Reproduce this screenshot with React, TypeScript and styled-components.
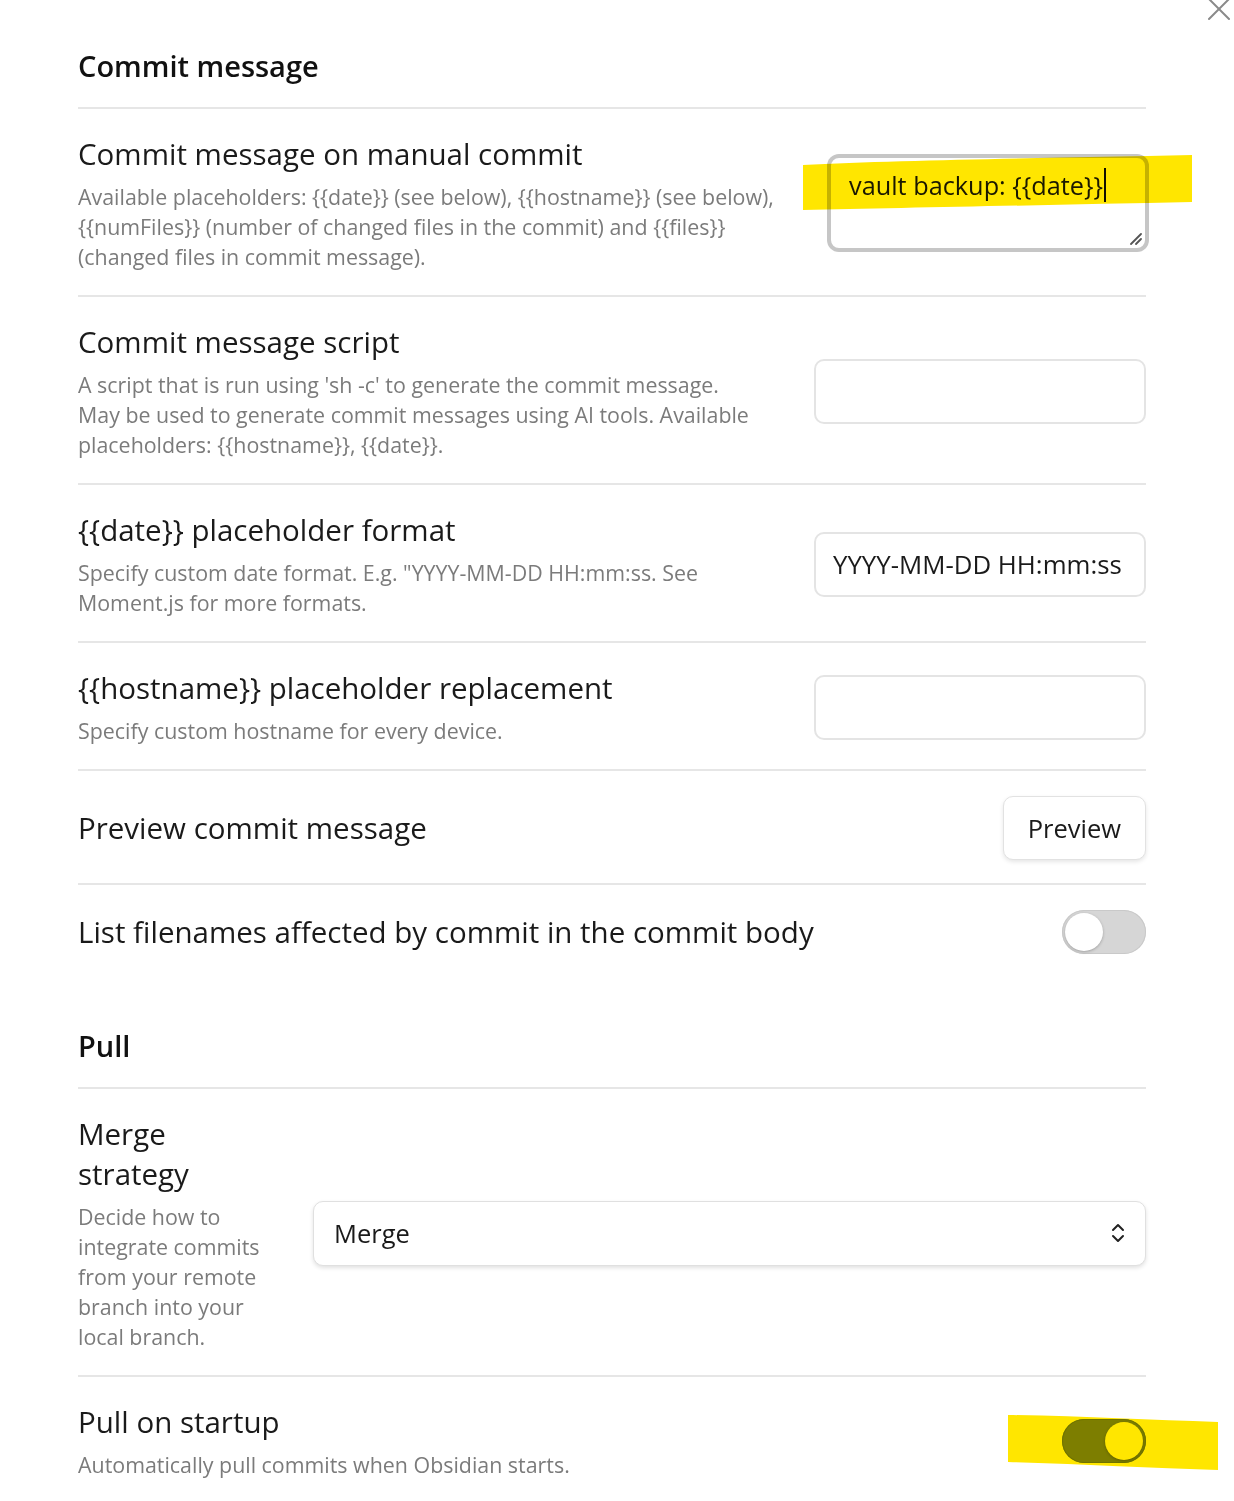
import React from "react";
import styled, { createGlobalStyle } from "styled-components";

const GlobalStyle = createGlobalStyle`
  html, body { margin: 0; padding: 0; background: #ffffff; }
  body { font-family: "Open Sans", "Noto Sans", sans-serif; color: #1e1e1e; }
  * { box-sizing: border-box; }
`;

const Page = styled.div`
  position: relative;
  width: 1234px;
  padding: 46px 88px 0 78px;
`;

const CloseButton = styled.div`
  position: absolute;
  top: -4px;
  right: 2px;
  width: 26px;
  height: 26px;
  display: flex;
  align-items: center;
  justify-content: center;
  color: #8a8a8a;
`;

const Heading = styled.div<{ $first?: boolean }>`
  font-size: 29px;
  font-weight: 600;
  line-height: 39px;
  color: #111;
  padding: ${(p) => (p.$first ? "0" : "48px")} 0 22px;
  border-bottom: 2px solid #e6e6e6;
`;

const Item = styled.div<{ $last?: boolean }>`
  display: flex;
  align-items: center;
  gap: 24px;
  padding: 25px 0 ${(p) => (p.$last ? "24px" : "23px")};
  border-bottom: ${(p) => (p.$last ? "none" : "2px solid #e6e6e6")};
`;

const Info = styled.div<{ $width?: number }>`
  flex: ${(p) => (p.$width ? `0 0 ${p.$width}px` : "1 1 auto")};
  min-width: 0;
`;

const Name = styled.div`
  font-size: 29.5px;
  line-height: 40px;
  color: #1a1a1a;
  white-space: pre-line;
`;

const Desc = styled.div`
  margin-top: 8px;
  font-size: 21.4px;
  line-height: 30px;
  color: #7b7b7b;
  white-space: pre-line;
`;

const Control = styled.div<{ $grow?: boolean }>`
  flex: ${(p) => (p.$grow ? "1 1 auto" : "0 0 auto")};
  display: flex;
  justify-content: flex-end;
`;

const TextInput = styled.div`
  width: 332px;
  height: 65px;
  border: 2px solid #e4e4e4;
  border-radius: 10px;
  background: #fff;
  display: flex;
  align-items: center;
  padding: 0 17px;
  font-size: 25.8px;
  color: #1a1a1a;
  white-space: nowrap;
`;

const TextArea = styled.div`
  position: relative;
  width: 318px;
  height: 94px;
  margin-right: -1px;
  border: 2px solid #c6c6c6;
  box-shadow: 0 0 0 2px #c6c6c6;
  border-radius: 10px;
  background: #fff;
  padding: 9px 18px;
  font-size: 25.3px;
  line-height: 36px;
  color: #1a1a1a;
  white-space: nowrap;
`;

const Caret = styled.span`
  display: inline-block;
  width: 2px;
  height: 34px;
  margin-left: 1px;
  background: #111;
  vertical-align: middle;
  position: relative;
  top: -3px;
`;

const Grip = styled.svg`
  position: absolute;
  right: 3px;
  bottom: 3px;
`;

const Button = styled.div`
  height: 64px;
  padding: 0 24px;
  border: 1px solid #e2e2e2;
  border-radius: 10px;
  background: #fff;
  box-shadow: 0 2px 4px rgba(0, 0, 0, 0.1);
  display: flex;
  align-items: center;
  font-size: 25.5px;
  color: #1a1a1a;
`;

const Toggle = styled.div<{ $on?: boolean }>`
  width: 84px;
  height: 44px;
  border-radius: 22px;
  padding: 3px;
  display: flex;
  justify-content: ${(p) => (p.$on ? "flex-end" : "flex-start")};
  align-items: center;
  background: ${(p) => (p.$on ? "#7d8ca1" : "#d6d6d6")};
  box-shadow: inset 0 0 0 1px ${(p) => (p.$on ? "#6f7f94" : "#c9c9c9")};
`;

const Thumb = styled.div`
  width: 38px;
  height: 38px;
  border-radius: 50%;
  background: #fff;
  box-shadow: 0 1px 3px rgba(0, 0, 0, 0.25);
`;

const Select = styled.div`
  width: 100%;
  height: 65px;
  border: 1px solid #e0e0e0;
  border-radius: 10px;
  background: #fff;
  box-shadow: 0 2px 4px rgba(0, 0, 0, 0.12);
  display: flex;
  align-items: center;
  justify-content: space-between;
  padding: 0 20px 0 20px;
  font-size: 25.5px;
  color: #1a1a1a;
`;

const Highlight = styled.svg`
  position: absolute;
  left: 0;
  top: 0;
  pointer-events: none;
  mix-blend-mode: multiply;
`;

export default function App() {
  return (
    <Page>
      <GlobalStyle />
      <CloseButton>
        <svg width="26" height="26" viewBox="0 0 26 26">
          <path d="M3 3 L23 23 M23 3 L3 23" stroke="currentColor" strokeWidth="2" strokeLinecap="round" />
        </svg>
      </CloseButton>

      <Heading $first>Commit message</Heading>

      <Item>
        <Info>
          <Name>Commit message on manual commit</Name>
          <Desc>
            {"Available placeholders: {{date}} (see below), {{hostname}} (see below),\n{{numFiles}} (number of changed files in the commit) and {{files}}\n(changed files in commit message)."}
          </Desc>
        </Info>
        <Control>
          <TextArea>
            vault backup: {"{{date}}"}
            <Caret />
            <Grip width="14" height="14" viewBox="0 0 14 14">
              <path d="M13 3 L3 13 M13 8 L8 13" stroke="#555" strokeWidth="1.8" strokeLinecap="round" />
            </Grip>
          </TextArea>
        </Control>
      </Item>

      <Item>
        <Info>
          <Name>Commit message script</Name>
          <Desc>
            {"A script that is run using 'sh -c' to generate the commit message.\nMay be used to generate commit messages using AI tools. Available\nplaceholders: {{hostname}}, {{date}}."}
          </Desc>
        </Info>
        <Control>
          <TextInput />
        </Control>
      </Item>

      <Item>
        <Info>
          <Name>{"{{date}} placeholder format"}</Name>
          <Desc>{"Specify custom date format. E.g. \"YYYY-MM-DD HH:mm:ss. See\nMoment.js for more formats."}</Desc>
        </Info>
        <Control>
          <TextInput>YYYY-MM-DD HH:mm:ss</TextInput>
        </Control>
      </Item>

      <Item>
        <Info>
          <Name>{"{{hostname}} placeholder replacement"}</Name>
          <Desc>Specify custom hostname for every device.</Desc>
        </Info>
        <Control>
          <TextInput />
        </Control>
      </Item>

      <Item>
        <Info>
          <Name>Preview commit message</Name>
        </Info>
        <Control>
          <Button>Preview</Button>
        </Control>
      </Item>

      <Item $last>
        <Info>
          <Name>List filenames affected by commit in the commit body</Name>
        </Info>
        <Control>
          <Toggle>
            <Thumb />
          </Toggle>
        </Control>
      </Item>

      <Heading>Pull</Heading>

      <Item>
        <Info $width={211}>
          <Name>{"Merge\nstrategy"}</Name>
          <Desc>{"Decide how to\nintegrate commits\nfrom your remote\nbranch into your\nlocal branch."}</Desc>
        </Info>
        <Control $grow>
          <Select>
            <span>Merge</span>
            <svg width="14" height="22" viewBox="0 0 14 22">
              <path d="M2 8 L7 3 L12 8 M2 14 L7 19 L12 14" fill="none" stroke="#222" strokeWidth="2" strokeLinecap="round" strokeLinejoin="round" />
            </svg>
          </Select>
        </Control>
      </Item>

      <Item $last>
        <Info>
          <Name>Pull on startup</Name>
          <Desc>Automatically pull commits when Obsidian starts.</Desc>
        </Info>
        <Control>
          <Toggle $on>
            <Thumb />
          </Toggle>
        </Control>
      </Item>

      <Highlight width="1234" height="1501" viewBox="0 0 1234 1501">
        <path d="M803 165 C 900 160, 1050 158, 1192 155 L1192 202 C 1050 205, 900 208, 803 210 Z" fill="#ffe600" />
        <path d="M1008 1415 C 1080 1416, 1150 1420, 1218 1422 L1218 1470 C 1150 1468, 1080 1464, 1008 1462 Z" fill="#ffe600" />
      </Highlight>
    </Page>
  );
}
